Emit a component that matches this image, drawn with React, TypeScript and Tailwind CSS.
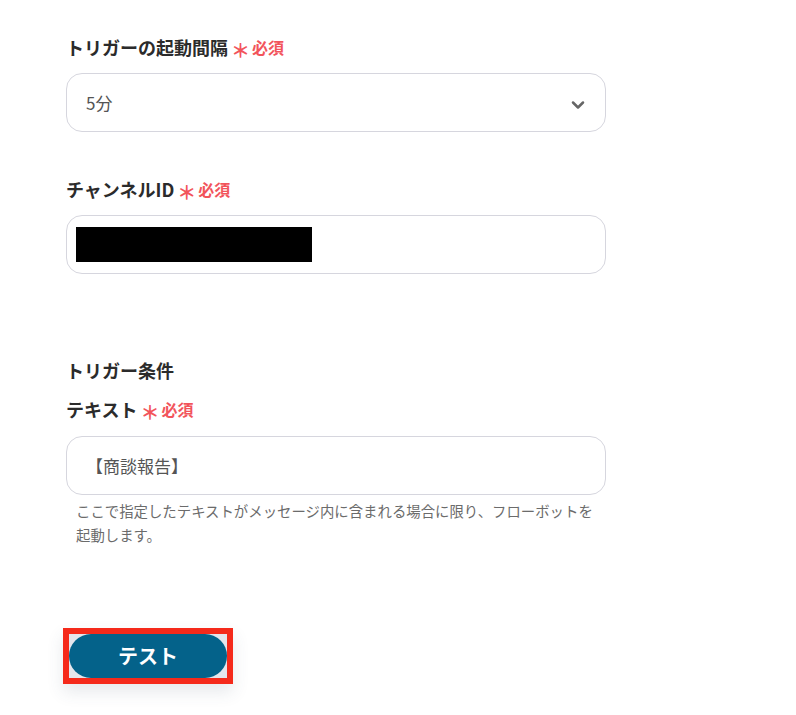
import React from "react";

const font = { fontFamily: '"Noto Sans CJK JP", "Noto Sans", sans-serif' };

function Required() {
  return (
    <span className="ml-[3px] inline-flex items-center text-[16px] font-bold text-[#f2545b]">
      <span className="mr-[2px] text-[19px] leading-none font-bold translate-y-[2px]">＊</span>
      必須
    </span>
  );
}

export default function App() {
  return (
    <div className="min-h-[715px] w-full bg-white text-[#333]" style={font}>
      <div className="flex w-[540px] flex-col ml-[66px] pt-[35px]">
        <div className="flex h-[24px] items-center text-[18px] font-bold leading-[24px] text-[#2b2b2b]">
          トリガーの起動間隔
          <Required />
        </div>
        <div className="mt-[14px] flex h-[59px] items-center justify-between rounded-[16px] border border-[#d6d6de] bg-white pl-[19px] pr-[17px]">
          <span className="text-[17px] text-[#555]">5分</span>
          <svg width="20" height="20" viewBox="0 0 24 24" fill="none" stroke="#666" strokeWidth="3" strokeLinecap="round" strokeLinejoin="round" className="translate-y-[2px]">
            <path d="M6 9l6 6 6-6" />
          </svg>
        </div>

        <div className="mt-[45px] flex h-[24px] items-center text-[18px] font-bold leading-[24px] text-[#2b2b2b]">
          チャンネルID
          <Required />
        </div>
        <div className="mt-[14px] flex h-[59px] items-center rounded-[16px] border border-[#d6d6de] bg-white pl-[9px]">
          <div className="h-[35px] w-[236px] bg-black" />
        </div>

        <div className="mt-[84px] flex h-[24px] items-center text-[18px] font-bold leading-[24px] text-[#2b2b2b]">
          トリガー条件
        </div>
        <div className="mt-[15px] flex h-[24px] items-center text-[18px] font-bold leading-[24px] text-[#2b2b2b]">
          テキスト
          <Required />
        </div>
        <div className="mt-[15px] flex h-[59px] items-center rounded-[16px] border border-[#d6d6de] bg-white pl-[19px]">
          <span className="text-[17px] text-[#555]">【商談報告】</span>
        </div>
        <p className="mt-[4px] w-[540px] pl-[10px] text-[14.4px] leading-[24px] text-[#6b6b6b]">
          ここで指定したテキストがメッセージ内に含まれる場合に限り、フローボットを
          <br />
          起動します。
        </p>

        <div className="ml-[-3px] mt-[81px] w-[170px] border-[6px] border-[#f52a1b] bg-[#e4e6ed] shadow-[0_8px_16px_rgba(60,70,100,0.12)]">
          <button className="flex h-[44px] w-full items-center justify-center rounded-full bg-[#04628a] text-[20px] font-bold text-white">
            テスト
          </button>
        </div>
      </div>
    </div>
  );
}
